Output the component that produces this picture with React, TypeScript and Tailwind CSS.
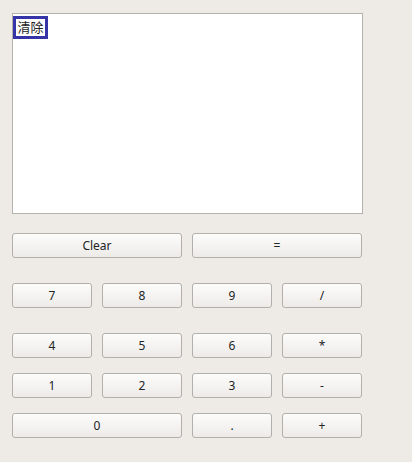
import React from 'react';

const Btn = ({ label, span }: { label: string; span?: boolean }) => (
  <button
    className={`h-[25px] rounded-[3px] border border-[#b3afaa] bg-gradient-to-b from-[#fcfcfb] to-[#edebe8] text-[12px] text-[#222426] leading-none ${span ? 'col-span-2' : ''}`}
  >
    {label}
  </button>
);

export default function App() {
  return (
    <div
      className="w-[412px] h-[462px] bg-[#eeebe7] pl-[12px] pt-[13px]"
      style={{ fontFamily: '"Noto Sans", "Noto Sans CJK SC", sans-serif' }}
    >
      <div className="w-[351px]">
        <div className="h-[201px] border border-[#b5b1ac] bg-white pt-[2px]">
          <div className="flex items-center justify-center w-[35px] h-[23px] border-[3px] border-[#3535a8] text-[13px] leading-none text-[#222]">
            清除
          </div>
        </div>

        <div className="grid grid-cols-[80px_80px_80px_80px] gap-x-[10px] mt-[19px]">
          <Btn label="Clear" span />
          <Btn label="=" span />
        </div>

        <div className="grid grid-cols-[80px_80px_80px_80px] gap-x-[10px] mt-[25px]">
          <Btn label="7" />
          <Btn label="8" />
          <Btn label="9" />
          <Btn label="/" />
        </div>

        <div className="grid grid-cols-[80px_80px_80px_80px] gap-x-[10px] gap-y-[15px] mt-[25px]">
          <Btn label="4" />
          <Btn label="5" />
          <Btn label="6" />
          <Btn label="*" />
          <Btn label="1" />
          <Btn label="2" />
          <Btn label="3" />
          <Btn label="-" />
          <Btn label="0" span />
          <Btn label="." />
          <Btn label="+" />
        </div>
      </div>
    </div>
  );
}
